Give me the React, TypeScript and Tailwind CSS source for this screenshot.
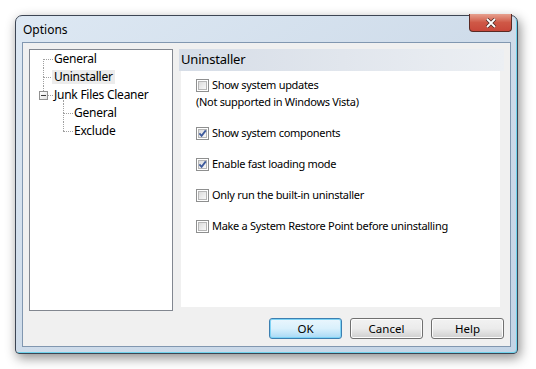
import React from "react"

const font = { fontFamily: '"Segoe UI", "Noto Sans", "Open Sans", sans-serif' }

function Checkbox({ checked }: { checked?: boolean }) {
  return (
    <span className="w-[13px] h-[13px] border border-[#8e8f8f] bg-white p-[1px] flex-shrink-0">
      <span className="block w-full h-full border border-[#b6b6b6] bg-gradient-to-br from-[#dcdcdc] to-[#f8f8f8] relative">
        {checked && (
          <svg viewBox="0 0 9 9" className="absolute left-[-1px] top-[-1px] w-[9px] h-[9px]">
            <path d="M1.4 4.4 L3.6 6.8 L7.8 1.4" fill="none" stroke="#3d5a9c" strokeWidth="1.8" />
          </svg>
        )}
      </span>
    </span>
  )
}

function Option({ label, checked, note }: { label: string; checked?: boolean; note?: string }) {
  return (
    <div>
      <div className="flex items-center gap-[2px] h-[18px]">
        <Checkbox checked={checked} />
        <span className="pl-[1px]">{label}</span>
      </div>
      {note && <div className="h-[18px] flex items-center mt-[-1px]">{note}</div>}
    </div>
  )
}

function TreeRow({
  label,
  level,
  vTop,
  vBottom,
  minus,
  selected,
  childTop,
}: {
  label: string
  level: number
  vTop?: boolean
  vBottom?: boolean
  minus?: boolean
  selected?: boolean
  childTop?: boolean
}) {
  const x = level === 0 ? 12 : 32
  return (
    <div className="relative h-[18px] flex items-center">
      {vTop && (
        <span className="absolute top-0 h-[9px] border-l border-dotted border-[#a0a0a0]" style={{ left: x }} />
      )}
      {vBottom && (
        <span className="absolute top-[9px] h-[9px] border-l border-dotted border-[#a0a0a0]" style={{ left: x }} />
      )}
      <span
        className="absolute top-[9px] w-[10px] border-t border-dotted border-[#a0a0a0]"
        style={{ left: x }}
      />
      {minus && (
        <span className="absolute left-[8px] top-[5px] w-[9px] h-[9px] border border-[#919191] bg-gradient-to-br from-white to-[#e2e2e2] flex items-center justify-center">
          <span className="w-[5px] h-px bg-[#3a3a3a]" />
        </span>
      )}
      {childTop && (
        <span className="absolute left-[32px] top-[14px] h-[4px] border-l border-dotted border-[#a0a0a0]" />
      )}
      <span
        className={
          "relative px-[2px] leading-[14px] " + (selected ? "bg-[#ececec]" : "")
        }
        style={{ marginLeft: x + 9 }}
      >
        {label}
      </span>
    </div>
  )
}

function Button({ label, primary }: { label: string; primary?: boolean }) {
  return (
    <button
      className={
        "w-[73px] h-[21px] rounded-[3px] border text-[11.5px] text-black flex items-center justify-center " +
        (primary
          ? "border-[#3c7fb1] bg-gradient-to-b from-[#eaf6fd] via-[#d9f0fc] to-[#a7d9f5] shadow-[inset_0_0_0_1px_#7ed3f5]"
          : "border-[#707070] bg-gradient-to-b from-[#f2f2f2] via-[#ebebeb] to-[#cfcfcf] shadow-[inset_0_0_0_1px_#fcfcfc]")
      }
    >
      {label}
    </button>
  )
}

export default function App() {
  return (
    <div className="w-[536px] h-[369px] bg-white pt-[15px] pl-[15px] text-[12px] text-black" style={font}>
      <div className="w-[503px] h-[339px] rounded-t-[7px] rounded-b-[4px] border border-[#3d4654] bg-gradient-to-br from-[#dde8f3] via-[#cfdcea] to-[#c3d4e6] shadow-[2px_4px_12px_rgba(0,0,0,0.45),inset_-1px_-1px_0_#6fd3ec] flex flex-col">
        <div className="h-[26px] flex items-start justify-between">
          <div className="pl-[7px] pt-[5px] text-[12px] text-black">Options</div>
          <div className="mr-[5px] mt-[-2px] w-[43px] h-[18px] rounded-b-[4px] border border-[#5a2a24] border-t-0 bg-gradient-to-b from-[#e6a08f] via-[#cf5846] to-[#c8473a] flex items-center justify-center">
            <svg viewBox="0 0 12 10" className="w-[12px] h-[10px]">
              <path d="M2 1 L10 9 M10 1 L2 9" stroke="#4a2a25" strokeWidth="3.4" />
              <path d="M2 1 L10 9 M10 1 L2 9" stroke="#ffffff" strokeWidth="1.8" />
            </svg>
          </div>
        </div>
        <div className="ml-[6px] w-[489px] h-[305px] border border-[#8197b0] bg-[#f0f0f0] p-[6px]">
          <div className="flex items-start gap-[6px]">
            <div className="w-[144px] h-[262px] border border-[#828790] bg-white pl-[1px] tracking-[-0.25px]">
              <TreeRow label="General" level={0} vBottom />
              <TreeRow label="Uninstaller" level={0} vTop vBottom selected />
              <TreeRow label="Junk Files Cleaner" level={0} vTop minus childTop />
              <TreeRow label="General" level={1} vTop vBottom />
              <TreeRow label="Exclude" level={1} vTop />
            </div>
            <div className="w-[325px] h-[258px] flex flex-col">
              <div className="h-[22px] bg-gradient-to-r from-[#d6dde7] via-[#e1e6ed] to-[#eceff3] pl-[2px] flex items-center text-[13px] tracking-[-0.2px]">
                Uninstaller
              </div>
              <div className="flex-1 mx-[2px] mr-[4px] bg-white pl-[15px] pt-[5px] flex flex-col gap-[13px] text-[11px] tracking-[-0.3px]">
                <Option label="Show system updates" note="(Not supported in Windows Vista)" />
                <Option label="Show system components" checked />
                <Option label="Enable fast loading mode" checked />
                <Option label="Only run the built-in uninstaller" />
                <Option label="Make a System Restore Point before uninstalling" />
              </div>
            </div>
          </div>
          <div className="mt-[7px] flex justify-end gap-[8px]">
            <Button label="OK" primary />
            <Button label="Cancel" />
            <Button label="Help" />
          </div>
        </div>
      </div>
    </div>
  )
}
